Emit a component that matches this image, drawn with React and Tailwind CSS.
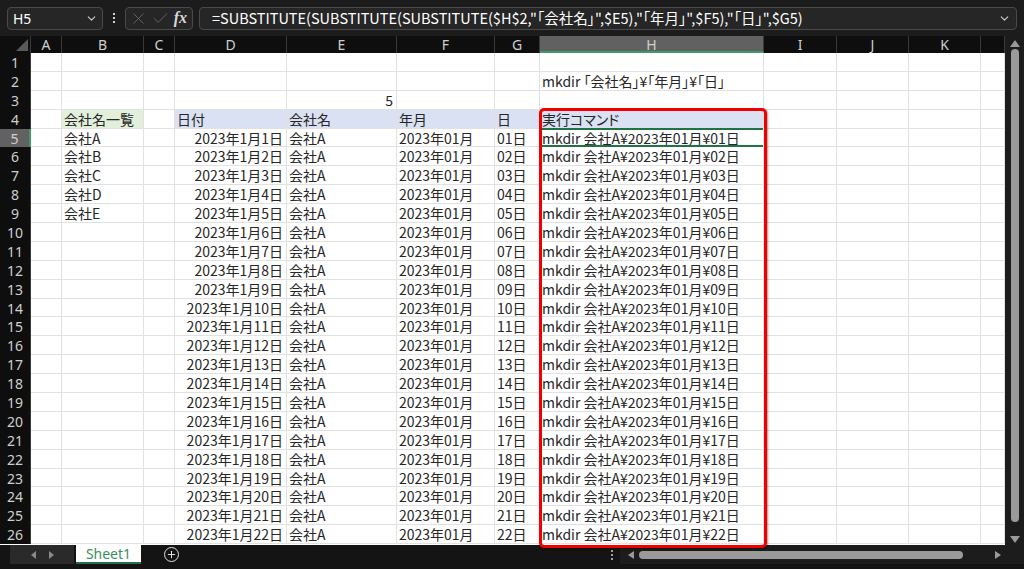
import { X, Check, ChevronDown, Plus } from "lucide-react";

const COLS = [
  { k: "A", w: 31 },
  { k: "B", w: 82 },
  { k: "C", w: 31 },
  { k: "D", w: 112 },
  { k: "E", w: 110 },
  { k: "F", w: 98 },
  { k: "G", w: 45 },
  { k: "H", w: 224 },
  { k: "I", w: 73 },
  { k: "J", w: 72 },
  { k: "K", w: 72 },
  { k: "L", w: 24, label: "" },
];

const FONT = { fontFamily: '"Noto Sans CJK JP", "Noto Sans", sans-serif', fontFeatureSettings: '"palt"' };
const LATIN = { fontFamily: '"Noto Sans", "Liberation Sans", sans-serif' };
const pad = (n) => String(n).padStart(2, "0");

function buildRows() {
  const rows = {};
  for (let r = 1; r <= 26; r++) rows[r] = {};
  rows[2].H = { t: "mkdir 「会社名」¥「年月」¥「日」" };
  rows[3].E = { t: "5", right: true };
  rows[4].B = { t: "会社名一覧", bg: "bg-[#e2efda]" };
  ["D", "E", "F", "G", "H"].forEach((c) => (rows[4][c] = { bg: "bg-[#d9e1f2]" }));
  rows[4].D.t = "日付";
  rows[4].E.t = "会社名";
  rows[4].F.t = "年月";
  rows[4].G.t = "日";
  rows[4].H.t = "実行コマンド";
  ["A", "B", "C", "D", "E"].forEach((s, i) => (rows[5 + i].B = { t: "会社" + s }));
  for (let r = 5; r <= 26; r++) {
    const d = r - 4;
    rows[r].D = { t: `2023年1月${d}日`, right: true };
    rows[r].E = { t: "会社A" };
    rows[r].F = { t: "2023年01月" };
    rows[r].G = { t: `${pad(d)}日` };
    rows[r].H = { t: `mkdir 会社A¥2023年01月¥${pad(d)}日` };
  }
  return rows;
}

const ROWS = buildRows();

function Cell({ col, data, active }) {
  return (
    <div
      className={`relative h-full shrink-0 overflow-visible whitespace-nowrap border-r border-b border-[#e1e1e1] px-[2px] text-[14px] leading-[19px] text-[#262626] ${
        data?.bg || "bg-white"
      } ${data?.right ? "text-right pr-[3px]" : ""}`}
      style={{ width: col.w }}
    >
      {data?.t}
      {active && <div className="absolute -top-px left-0 right-0 -bottom-px border-y-2 border-[#217346]" />}
    </div>
  );
}

function Toolbar() {
  return (
    <div className="flex h-[36px] items-center gap-[6px] bg-[#1c1c1c] px-[7px]">
      <div className="flex h-[23px] w-[96px] items-center justify-between rounded-[4px] border border-[#4a4a4a] bg-[#262626] pl-[5px] pr-[4px] text-[14px] text-white" style={LATIN}>
        <span>H5</span>
        <ChevronDown size={13} className="text-[#d0d0d0]" />
      </div>
      <div className="flex w-[10px] flex-col items-center gap-[2px]">
        <div className="h-[2px] w-[2px] bg-[#d0d0d0]" />
        <div className="h-[2px] w-[2px] bg-[#d0d0d0]" />
        <div className="h-[2px] w-[2px] bg-[#d0d0d0]" />
      </div>
      <div className="flex h-[23px] w-[68px] items-center gap-[3px] rounded-[4px] border border-[#4a4a4a] bg-[#262626] px-[3px]">
        <X size={19} strokeWidth={1.1} className="text-[#6a6a6a]" />
        <Check size={19} strokeWidth={1.1} className="text-[#6a6a6a]" />
        <span className="ml-auto pr-[2px] text-[16px] italic font-semibold text-[#d8d8d8]" style={{ fontFamily: '"Liberation Serif", serif' }}>
          fx
        </span>
      </div>
      <div className="flex h-[23px] flex-1 items-center justify-between rounded-[4px] border border-[#4a4a4a] bg-[#262626] pl-[12px] pr-[5px]">
        <span className="text-[14.5px] text-white" style={FONT}>
          =SUBSTITUTE(SUBSTITUTE(SUBSTITUTE($H$2,"「会社名」",$E5),"「年月」",$F5),"「日」",$G5)
        </span>
        <ChevronDown size={13} className="text-[#d0d0d0]" />
      </div>
    </div>
  );
}

function Sheet() {
  return (
    <div className="flex h-[509px]">
      <div className="w-[1005px] overflow-hidden bg-white" style={FONT}>
        <div className="flex h-[17px] bg-[#0e0e0e] text-[14px] leading-[17px] text-[#cfcfcf]" style={LATIN}>
          <div className="relative w-[31px] shrink-0 border-r border-[#3a3a3a]">
            <svg className="absolute right-[2px] bottom-[2px]" width="12" height="12" viewBox="0 0 12 12">
              <polygon points="12,0 12,12 0,12" fill="#5a5a5a" />
            </svg>
          </div>
          {COLS.map((c) => (
            <div
              key={c.k}
              className={`shrink-0 border-r border-[#3a3a3a] text-center ${
                c.k === "H" ? "bg-[#616161] border-b-2 border-b-[#3f9a65]" : ""
              }`}
              style={{ width: c.w }}
            >
              {c.label ?? c.k}
            </div>
          ))}
        </div>
        {Array.from({ length: 26 }, (_, i) => i + 1).map((r) => (
          <div key={r} className="flex h-[18.9px]">
            <div
              className={`w-[31px] shrink-0 text-center text-[14px] leading-[19px] text-[#cfcfcf] ${
                r === 5 ? "bg-[#616161] border-r-2 border-[#3f9a65]" : "bg-[#0e0e0e] border-r border-[#3a3a3a]"
              }`}
              style={LATIN}
            >
              {r}
            </div>
            {COLS.map((c) => (
              <Cell key={c.k} col={c} data={ROWS[r][c.k]} active={r === 5 && c.k === "H"} />
            ))}
          </div>
        ))}
      </div>
      <div className="flex w-[19px] flex-col items-center bg-[#1c1c1c] pt-[4px] pb-[2px]">
        <svg width="10" height="7" viewBox="0 0 10 7">
          <polygon points="5,0 10,7 0,7" fill="#9a9a9a" />
        </svg>
        <div className="mt-[2px] mb-[14px] w-[8px] flex-1 rounded-full bg-[#9a9a9a]" />
        <svg width="10" height="7" viewBox="0 0 10 7">
          <polygon points="0,0 10,0 5,7" fill="#9a9a9a" />
        </svg>
      </div>
    </div>
  );
}

function BottomBar() {
  return (
    <div className="flex h-[24px] flex-col bg-[#141414]">
      <div className="flex h-[19px] items-stretch">
        <div className="ml-[10px] flex w-[64px] items-center justify-center gap-[13px] bg-[#2a2a2a]">
          <svg width="5" height="8" viewBox="0 0 5 8">
            <polygon points="5,0 5,8 0,4" fill="#8a8a8a" />
          </svg>
          <svg width="5" height="8" viewBox="0 0 5 8">
            <polygon points="0,0 0,8 5,4" fill="#8a8a8a" />
          </svg>
        </div>
        <div className="ml-[2px] flex w-[65px] items-center justify-center border-b-2 border-[#217346] bg-white text-[14px] text-[#3a8f5c]" style={LATIN}>
          Sheet1
        </div>
        <div className="ml-[23px] flex w-[16px] items-center">
          <div className="flex h-[15px] w-[15px] items-center justify-center rounded-full border border-[#e0e0e0]">
            <Plus size={11} strokeWidth={2.2} className="text-[#e0e0e0]" />
          </div>
        </div>
        <div className="ml-auto flex w-[416px] items-center">
          <div className="flex w-[8px] flex-col items-center gap-[2px]">
            <div className="h-[2px] w-[2px] bg-[#a0a0a0]" />
            <div className="h-[2px] w-[2px] bg-[#a0a0a0]" />
            <div className="h-[2px] w-[2px] bg-[#a0a0a0]" />
          </div>
          <div className="ml-[4px] flex h-full flex-1 items-center bg-[#1c1c1c] pl-[8px]">
            <svg width="6" height="8" viewBox="0 0 6 8">
              <polygon points="6,0 6,8 0,4" fill="#9a9a9a" />
            </svg>
            <div className="ml-[5px] h-[8px] w-[324px] rounded-full bg-[#9a9a9a]" />
            <div className="flex-1" />
            <svg width="6" height="8" viewBox="0 0 6 8">
              <polygon points="0,0 0,8 6,4" fill="#9a9a9a" />
            </svg>
            <div className="w-[23px]" />
          </div>
        </div>
      </div>
    </div>
  );
}

export default function App() {
  return (
    <div className="relative h-[569px] w-[1024px] overflow-hidden bg-[#141414]" style={FONT}>
      <Toolbar />
      <Sheet />
      <BottomBar />
      <div className="pointer-events-none absolute left-[539px] top-[108px] h-[440px] w-[228px] rounded-[5px] border-[3px] border-[#f20000] shadow-[1px_1px_2px_rgba(0,0,0,0.4)]" />
    </div>
  );
}
